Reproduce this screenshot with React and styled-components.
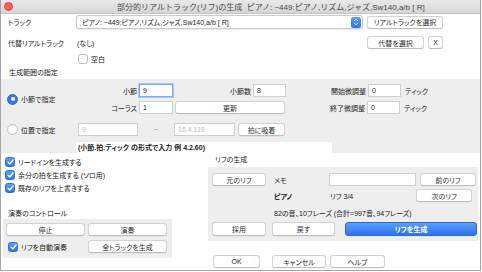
import React from 'react';
import styled, { createGlobalStyle, css } from 'styled-components';

const GlobalStyle = createGlobalStyle`
  html, body {
    margin: 0;
    padding: 0;
    background: #ffffff;
  }
  body {
    font-family: "Liberation Sans", "Noto Sans CJK JP", sans-serif;
    font-size: 7px;
    font-feature-settings: "palt";
    color: #1c1c1c;
  }
  * {
    box-sizing: border-box;
  }
`;

const Window = styled.div`
    width: 481px;
    height: 271px;
    border: 1px solid #a6a6a6;
    border-top: none;
    background: #ffffff;
    display: flex;
    flex-direction: column;
    overflow: hidden;
`;

const TitleBar = styled.div`
    height: 14px;
    flex: none;
    display: flex;
    align-items: center;
    background: linear-gradient(#e9e9e9, #d6d6d6);
    border-bottom: 1px solid #c2c2c2;

    span {
        margin-left: 104px;
        font-size: 8px;
        font-feature-settings: normal;
        color: #4a4a4a;
        white-space: nowrap;
    }
`;

const CloseDot = styled.i`
    width: 9px;
    height: 9px;
    margin-left: 3px;
    border-radius: 50%;
    background: #fc5f57;
    border: 0.5px solid #e0443e;
`;

const Upper = styled.div`
    padding-left: 7px;
    display: flex;
    flex-direction: column;
`;

const Row = styled.div`
    display: flex;
    align-items: center;
    height: ${p => p.h || 13}px;
    margin-top: ${p => p.mt || 0}px;
    padding-left: ${p => p.pl || 0}px;
    flex: none;
`;

const Label = styled.div`
    width: ${p => p.w ? `${p.w}px` : 'auto'};
    flex: none;
    white-space: nowrap;
    text-align: ${p => p.right ? 'right' : 'left'};
    padding-right: ${p => p.right ? 2 : 0}px;
    margin-left: ${p => p.ml || 0}px;
    font-weight: ${p => p.bold ? 700 : 400};
`;

const Select = styled.div`
    width: 287px;
    height: 14px;
    flex: none;
    display: flex;
    align-items: center;
    background: #fff;
    border: 1px solid #cbcbcb;
    border-radius: 3px;
    box-shadow: 0 0.5px 1px rgba(0, 0, 0, 0.08);
    padding-left: 5px;

    span {
        flex: 1;
        white-space: nowrap;
    }
`;

const Stepper = styled.div`
    width: 10px;
    height: 11px;
    margin-right: 1px;
    border-radius: 2.5px;
    background: linear-gradient(#5b9cf7, #2f73ec);
    display: flex;
    align-items: center;
    justify-content: center;
`;

const Button = styled.div`
    width: ${p => p.w}px;
    height: ${p => p.h || 13}px;
    margin-left: ${p => p.ml || 0}px;
    flex: ${p => p.grow ? 1 : 'none'};
    display: flex;
    align-items: center;
    justify-content: center;
    white-space: nowrap;
    background: #ffffff;
    border: 1px solid #d2d2d2;
    border-bottom-color: #bdbdbd;
    border-radius: 3px;
    box-shadow: 0 0.5px 0.5px rgba(0, 0, 0, 0.06);
    color: #2a2a2a;
    ${p => p.primary && css`
        background: linear-gradient(#5d9ff8, #2c73ed);
        border-color: #2a69d8;
        color: #ffffff;
        font-weight: 700;
    `}
`;

const Input = styled.div`
    width: ${p => p.w}px;
    height: 13px;
    margin-left: ${p => p.ml || 0}px;
    flex: none;
    display: flex;
    align-items: center;
    padding-left: 3px;
    background: #ffffff;
    border: 1px solid #cfcfcf;
    color: ${p => p.disabled ? '#bdbdbd' : '#222'};
    ${p => p.focused && css`
        border: 1px solid #7da9ef;
        box-shadow: 0 0 0 1px #a9c7f5;
    `}
`;

const CheckRow = styled.label`
    display: flex;
    align-items: center;
    gap: 3px;
    height: ${p => p.h || 13}px;
    padding-left: ${p => p.pl || 0}px;
    margin-top: ${p => p.mt || 0}px;
    white-space: nowrap;
`;

const Box = styled.span`
    width: 10px;
    height: 10px;
    flex: none;
    border-radius: 2.5px;
    display: flex;
    align-items: center;
    justify-content: center;
    background: ${p => p.on ? 'linear-gradient(#5a9cf7, #2f72ea)' : '#ffffff'};
    border: 1px solid ${p => p.on ? '#2e6ede' : '#bdbdbd'};
`;

const Radio = styled.span`
    width: 11px;
    height: 11px;
    flex: none;
    border-radius: 50%;
    display: flex;
    align-items: center;
    justify-content: center;
    background: ${p => p.on ? '#3479ef' : '#ffffff'};
    border: 1px solid ${p => p.on ? '#2f6fdc' : '#bcbcbc'};

    &::after {
        content: '';
        width: 4px;
        height: 4px;
        border-radius: 50%;
        background: #fff;
        display: ${p => p.on ? 'block' : 'none'};
    }
`;

const RangeGroup = styled.div`
    margin-top: 1px;
    background: #eeeeee;
    padding: 5px 0 1px 5px;
    display: flex;
    flex-direction: column;
    height: 74px;
    flex: none;
`;

const Block = styled.div`
    display: flex;
    margin-top: ${p => p.mt || 0}px;
`;

const RadioCell = styled.div`
    width: 70px;
    flex: none;
    display: flex;
    align-items: center;
    gap: 3px;
    padding-left: 1px;
    white-space: nowrap;
`;

const Stack = styled.div`
    display: flex;
    flex-direction: column;
    gap: 4px;
`;

const Tilde = styled.div`
    width: 36px;
    text-align: center;
    color: #8a8a8a;
`;

const Hint = styled.div`
    margin: 6px 0 0 70px;
    width: 256px;
    height: 11px;
    line-height: 11px;
    padding-left: 2px;
    background: #ffffff;
    white-space: nowrap;
    font-weight: 700;
`;

const Lower = styled.div`
    display: flex;
    flex: 1;
`;

const LeftCol = styled.div`
    width: 171px;
    flex: none;
    padding: 2px 0 0 2px;
    display: flex;
    flex-direction: column;
`;

const Caption = styled.div`
    height: 10px;
    line-height: 10px;
    margin-top: ${p => p.mt || 0}px;
    padding-left: ${p => p.pl || 0}px;
    white-space: nowrap;
`;

const PlayGroup = styled.div`
    width: 169px;
    background: #eeeeee;
    padding: 4px 5px 5px 3px;
    display: grid;
    grid-template-columns: 79px 79px;
    grid-auto-rows: 13px;
    column-gap: 3px;
    row-gap: 4px;
`;

const RightCol = styled.div`
    width: 270px;
    margin-left: 36px;
    flex: none;
    padding-top: 2px;
    display: flex;
    flex-direction: column;
`;

const RiffGroup = styled.div`
    margin-top: 2px;
    background: #eeeeee;
    padding: 6px 1px 5px 4px;
    display: flex;
    flex-direction: column;
`;

const Footer = styled.div`
    display: flex;
    margin-top: 14px;
    padding-left: 5px;
`;

const Tick = () => (
    <svg width="7" height="6" viewBox="0 0 7 6">
        <path d="M1 3.2 L2.8 5 L6 1" fill="none" stroke="#fff" strokeWidth="1.3" strokeLinecap="round" strokeLinejoin="round" />
    </svg>
);

const Check = ({ on, children, ...rest }) => (
    <CheckRow {...rest}>
        <Box on={on ? 1 : 0}>{on && <Tick />}</Box>
        {children}
    </CheckRow>
);

const App = () => {
    return (
        <>
            <GlobalStyle />
            <Window>
                <TitleBar>
                    <CloseDot />
                    <span>部分的リアルトラック(リフ)の生成&nbsp;&nbsp;ピアノ: ~449:ピアノ,リズム,ジャズ,Sw140,a/b [ R]</span>
                </TitleBar>

                <Upper>
                    <Row h={14} mt={1}>
                        <Label w={68}>トラック</Label>
                        <Select>
                            <span>ピアノ: ~449:ピアノ,リズム,ジャズ,Sw140,a/b [ R]</span>
                            <Stepper>
                                <svg width="6" height="8" viewBox="0 0 6 8">
                                    <path d="M1.2 3 L3 1.2 L4.8 3 M1.2 5 L3 6.8 L4.8 5" fill="none" stroke="#fff" strokeWidth="0.9" />
                                </svg>
                            </Stepper>
                        </Select>
                        <Button w={76} ml={4}>リアルトラックを選択</Button>
                    </Row>
                    <Row mt={7}>
                        <Label w={69}>代替リアルトラック</Label>
                        <Label w={290}>(なし)</Label>
                        <Button w={57}>代替を選択</Button>
                        <Button w={15} ml={4}>X</Button>
                    </Row>
                    <Check mt={5} h={9} pl={70}>空白</Check>
                    <Caption mt={5} pl={1}>生成範囲の指定</Caption>
                </Upper>

                <RangeGroup>
                    <Block>
                        <RadioCell>
                            <Radio on={1} />
                            <span>小節で指定</span>
                        </RadioCell>
                        <Stack>
                            <Row>
                                <Label w={63} right>小節</Label>
                                <Input w={34} focused>9</Input>
                                <Label w={80} right>小節数</Label>
                                <Input w={33}>8</Input>
                                <Label w={82} right>開始微調整</Label>
                                <Input w={33}>0</Input>
                                <Label ml={4}>ティック</Label>
                            </Row>
                            <Row>
                                <Label w={63} right>コーラス</Label>
                                <Input w={34}>1</Input>
                                <Button w={110} ml={2}>更新</Button>
                                <Label w={82} right>終了微調整</Label>
                                <Input w={33}>0</Input>
                                <Label ml={4}>ティック</Label>
                            </Row>
                        </Stack>
                    </Block>
                    <Block mt={9}>
                        <RadioCell>
                            <Radio />
                            <span>位置で指定</span>
                        </RadioCell>
                        <Row>
                            <Input w={60} ml={2} disabled>9</Input>
                            <Tilde>~</Tilde>
                            <Input w={61} disabled>16.4.119</Input>
                            <Button w={47} ml={3}>拍に吸着</Button>
                        </Row>
                    </Block>
                    <Hint>(小節.拍.ティック の形式で入力 例 4.2.60)</Hint>
                </RangeGroup>

                <Lower>
                    <LeftCol>
                        <Check on pl={2}>リードインを生成する</Check>
                        <Check on pl={2}>余分の拍を生成する (ソロ用)</Check>
                        <Check on pl={2}>既存のリフを上書きする</Check>
                        <Caption mt={15} pl={5}>演奏のコントロール</Caption>
                        <PlayGroup>
                            <Button w={79}>停止</Button>
                            <Button w={79}>演奏</Button>
                            <Check on pl={2}>リフを自動演奏</Check>
                            <Button w={79}>全トラックを生成</Button>
                        </PlayGroup>
                    </LeftCol>

                    <RightCol>
                        <Caption pl={7}>リフの生成</Caption>
                        <RiffGroup>
                            <Row>
                                <Button w={54}>元のリフ</Button>
                                <Label w={55} ml={8}>メモ</Label>
                                <Input w={87} />
                                <Button w={56} ml={4}>前のリフ</Button>
                            </Row>
                            <Row mt={3}>
                                <Label w={56} ml={62} bold>ピアノ</Label>
                                <Label>リフ 3/4</Label>
                                <Button w={56} ml={63}>次のリフ</Button>
                            </Row>
                            <Row h={11} mt={5} pl={62}>
                                <Label>82の音、10フレーズ (合計=997音、94フレーズ)</Label>
                            </Row>
                            <Row h={14} mt={4}>
                                <Button w={54} h={14}>採用</Button>
                                <Button w={63} h={14} ml={6}>戻す</Button>
                                <Button h={14} ml={10} grow primary>リフを生成</Button>
                            </Row>
                        </RiffGroup>
                        <Footer>
                            <Button w={47}>OK</Button>
                            <Button w={54} ml={12}>キャンセル</Button>
                            <Button w={55} ml={4}>ヘルプ</Button>
                        </Footer>
                    </RightCol>
                </Lower>
            </Window>
        </>
    );
};

export default App;
